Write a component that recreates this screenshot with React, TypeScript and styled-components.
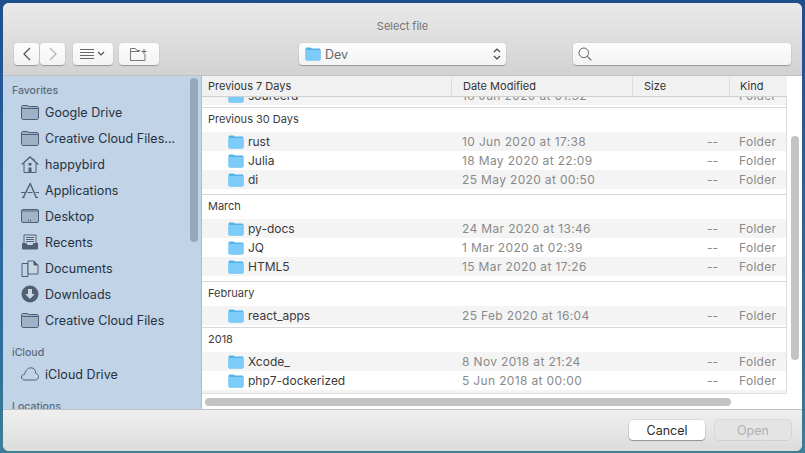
import React from "react";
import styled, { createGlobalStyle } from "styled-components";

const Global = createGlobalStyle`
  html, body { margin: 0; padding: 0; width: 805px; height: 453px; overflow: hidden; }
  body {
    background: linear-gradient(180deg, #1d4f8f 0%, #2a609c 40%, #2f6f99 80%, #3f7f96 100%);
    font-family: Inter, "Liberation Sans", sans-serif;
  }
`;

const Desktop = styled.div`
  width: 805px;
  height: 453px;
  padding: 3px 3px 2px 3px;
  box-sizing: border-box;
`;
const Win = styled.div`
  height: 448px;
  border-radius: 6px;
  overflow: hidden;
  display: flex;
  flex-direction: column;
  background: #ececec;
`;
const TitleBar = styled.div`
  height: 73px;
  flex: none;
  box-sizing: border-box;
  background: linear-gradient(180deg, #e9e9e9 0%, #d2d2d2 100%);
  border-bottom: 1px solid #c2c2c2;
  display: flex;
  flex-direction: column;
`;
const Title = styled.div`
  height: 40px;
  flex: none;
  box-sizing: border-box;
  padding-top: 16px;
  font-size: 11px;
  line-height: 14px;
  text-align: center;
  color: #727272;
`;
const Toolbar = styled.div`
  display: flex;
  padding-left: 11px;
  height: 22px;
  align-items: stretch;
`;
const ToolButton = styled.div<{ $w: number; $ml?: number }>`
  width: ${(p) => p.$w}px;
  flex: none;
  box-sizing: border-box;
  margin-left: ${(p) => p.$ml ?? 0}px;
  background: linear-gradient(180deg, #fdfdfd, #f3f3f3);
  border-radius: 4px;
  box-shadow: 0 1px 1px rgba(0, 0, 0, 0.28), 0 0 0 0.5px rgba(0, 0, 0, 0.06);
  display: flex;
  align-items: center;
  justify-content: center;
  color: #555;
`;
const PopUp = styled(ToolButton)`
  justify-content: flex-start;
  padding: 0 5px 0 6px;
  gap: 4px;
  font-size: 12.5px;
  color: #666;
`;
const PopText = styled.span`
  flex: 1;
`;
const Search = styled(ToolButton)`
  justify-content: flex-start;
  padding-left: 5px;
`;
const Body = styled.div`
  height: 333px;
  flex: none;
  display: flex;
`;
const Sidebar = styled.div`
  width: 199px;
  flex: none;
  position: relative;
  overflow: hidden;
  box-sizing: border-box;
  background: #c0d3e7;
  border-right: 1px solid #a8bed6;
  padding-top: 7px;
  color: #2b3a4d;
`;
const SideHead = styled.div<{ $mt?: number }>`
  height: 16px;
  line-height: 16px;
  margin-top: ${(p) => p.$mt ?? 0}px;
  padding-left: 9px;
  font-size: 10.5px;
  font-weight: 500;
  color: #5c6b7c;
`;
const SideRow = styled.div`
  height: 26px;
  display: flex;
  align-items: center;
  padding-left: 18px;
  gap: 6px;
  font-size: 12.5px;
  letter-spacing: 0.05px;
  color: #25323f;
  white-space: nowrap;
`;
const SideIconBox = styled.span`
  width: 18px;
  flex: none;
  display: flex;
  justify-content: center;
`;
const SideScroll = styled.div`
  position: absolute;
  right: 3px;
  top: 2px;
  width: 8px;
  height: 164px;
  border-radius: 4px;
  background: #95a7ba;
`;
const Main = styled.div`
  flex: 1;
  position: relative;
  display: flex;
  flex-direction: column;
  background: #fff;
  overflow: hidden;
`;
const Header = styled.div`
  width: 585px;
  height: 21px;
  flex: none;
  box-sizing: border-box;
  background: #f1f1f1;
  border-bottom: 1px solid #cfcfcf;
  display: grid;
  grid-template-columns: 249px 181px 97px 58px;
  font-size: 11px;
  color: #333;
`;
const HeadCell = styled.div<{ $sep?: boolean; $pl: number }>`
  padding-left: ${(p) => p.$pl}px;
  box-sizing: border-box;
  height: 18px;
  margin-top: 1px;
  line-height: 18px;
  border-left: ${(p) => (p.$sep ? "1px solid #dcdcdc" : "none")};
`;
const Viewport = styled.div`
  width: 585px;
  height: 297px;
  flex: none;
  overflow: hidden;
  box-sizing: border-box;
  border-right: 1px solid #dedede;
  border-bottom: 1px solid #dedede;
`;
const Scroller = styled.div`
  margin-top: -11px;
`;
const Group = styled.div<{ $pb: number }>`
  border-bottom: 1px solid #d8d8d8;
  padding-bottom: ${(p) => p.$pb}px;
`;
const GroupHead = styled.div`
  height: 24px;
  line-height: 22px;
  padding-left: 6px;
  font-size: 11px;
  color: #3c3c3c;
  background: #fff;
`;
const Row = styled.div<{ $alt?: boolean }>`
  height: 19px;
  display: grid;
  grid-template-columns: 249px 181px 97px 58px;
  align-items: center;
  background: ${(p) => (p.$alt ? "#f4f4f4" : "#fff")};
  font-size: 12px;
`;
const NameCell = styled.div`
  display: flex;
  align-items: center;
  gap: 4px;
  padding-left: 26px;
  color: #3a3a3a;
`;
const DateCell = styled.div`
  padding-left: 11px;
  color: #8a8a8a;
  letter-spacing: 0.35px;
  white-space: nowrap;
`;
const SizeCell = styled.div`
  text-align: right;
  padding-right: 11px;
  color: #8a8a8a;
`;
const KindCell = styled.div`
  padding-left: 10px;
  letter-spacing: 0.3px;
  color: #8a8a8a;
`;
const VScroll = styled.div`
  position: absolute;
  right: 3px;
  top: 60px;
  width: 8px;
  height: 224px;
  border-radius: 4px;
  background: #c3c3c3;
`;
const HTrack = styled.div`
  flex: 1;
  display: flex;
  align-items: center;
  padding-left: 3px;
`;
const HThumb = styled.div`
  width: 526px;
  height: 8px;
  border-radius: 4px;
  background: #c3c3c3;
`;
const Footer = styled.div`
  flex: 1;
  box-sizing: border-box;
  border-top: 1px solid #c2c2c2;
  background: linear-gradient(180deg, #efefef 0%, #dcdcdc 100%);
  display: flex;
  justify-content: flex-end;
  gap: 10px;
  padding: 10px 11px 0 0;
`;
const Btn = styled.div<{ $disabled?: boolean }>`
  width: 76px;
  height: 20px;
  line-height: 21px;
  text-align: center;
  font-size: 12.5px;
  border-radius: 4px;
  color: ${(p) => (p.$disabled ? "#b0b0b0" : "#2a2a2a")};
  background: ${(p) => (p.$disabled ? "#e4e4e4" : "#fff")};
  box-shadow: ${(p) =>
    p.$disabled
      ? "0 0 0 1px rgba(0,0,0,0.07)"
      : "0 1px 1px rgba(0,0,0,0.3), 0 0 0 0.5px rgba(0,0,0,0.15)"};
`;

const Folder = () => (
  <svg width="16" height="14" viewBox="0 0 16 14" style={{ flex: "none" }}>
    <path d="M.5 2.200C.5 1.200 1.200.6 2 .6h3.200c.8 0 1.100.9 1.900.9H14c.9 0 1.500.6 1.500 1.500v9c0 .9-.6 1.500-1.500 1.500H2c-.9 0-1.500-.6-1.500-1.500z" fill="#52b3ea" />
    <path d="M.5 3.600c0-.4.3-.7.7-.7h13.600c.4 0 .7.3.7.7v8.700c0 .7-.5 1.200-1.200 1.200H1.700c-.7 0-1.200-.5-1.200-1.200z" fill="#7ccbf8" />
  </svg>
);

const stroke = { fill: "none", stroke: "#4f6074", strokeWidth: 1 };

const SideFolder = () => (
  <svg width="18" height="15" viewBox="0 0 18 15">
    <path d="M.5 2c0-.8.6-1.500 1.500-1.500h4c.8 0 1 1 1.800 1H16c.8 0 1.500.6 1.500 1.500v10c0 .8-.7 1.500-1.500 1.500H2c-.9 0-1.500-.7-1.500-1.500z" fill="#9fb1c6" stroke="#4f6074" />
    <path d="M.5 3.500h17" {...stroke} />
  </svg>
);
const HomeIcon = () => (
  <svg width="18" height="17" viewBox="0 0 18 17">
    <path d="M.8 8.500 9 1l8.200 7.500" fill="none" stroke="#4f6074" strokeWidth="1.300" />
    <path d="M3 7v9.500h12V7" {...stroke} />
    <path d="M13 2.500v2.500" {...stroke} />
    <rect x="7.500" y="11.500" width="3" height="5" fill="#4f6074" />
    <rect x="7.500" y="7" width="3" height="2.500" fill="#4f6074" />
  </svg>
);
const AppsIcon = () => (
  <svg width="18" height="17" viewBox="0 0 18 17">
    <path d="M2 16 9.500 1M9 1l6.500 15" fill="none" stroke="#4f6074" strokeWidth="1.400" />
    <path d="M0 10.500h4M6.500 10.500h5M14.500 10.500h3.500" fill="none" stroke="#4f6074" strokeWidth="1.100" />
    <path d="M1 15.500h2.500M14.500 15.500H17" stroke="#4f6074" strokeWidth="1" />
  </svg>
);
const DesktopIcon = () => (
  <svg width="18" height="14" viewBox="0 0 18 14">
    <rect x=".5" y=".5" width="17" height="13" rx="1.500" fill="#a2b4c8" stroke="#4f6074" />
    <rect x="1" y="1" width="16" height="2" fill="#7a8ca1" />
    <path d="M7 11.500h4" stroke="#4f6074" strokeDasharray="1 1" strokeWidth="1.500" />
  </svg>
);
const RecentsIcon = () => (
  <svg width="18" height="16" viewBox="0 0 18 16">
    <path d="M3 9V1h12v8" fill="#c9d6e4" stroke="#4f6074" />
    <path d="M5 3.500h8M5 5.500h8M5 7.500h8" {...stroke} />
    <path d="M1 9h4.500l1 2h5l1-2H17v5.500c0 .6-.4 1-1 1H2c-.6 0-1-.4-1-1z" fill="#4f6074" />
  </svg>
);
const DocsIcon = () => (
  <svg width="18" height="17" viewBox="0 0 18 17">
    <path d="M1 3.500h6v13H1z" fill="none" stroke="#4f6074" />
    <path d="M7 1h6l4 4v9H7z" fill="#c9d6e4" stroke="#4f6074" />
    <path d="M13 1v4h4" fill="#4f6074" stroke="#4f6074" />
  </svg>
);
const DownloadIcon = () => (
  <svg width="18" height="18" viewBox="0 0 18 18">
    <circle cx="9" cy="9" r="8.500" fill="#4f6074" />
    <path d="M7 4h4v5h2.800L9 14 4.200 9H7z" fill="#c9d6e4" />
  </svg>
);
const CloudIcon = () => (
  <svg width="18" height="14" viewBox="0 0 18 14">
    <path d="M4 13c-2 0-3.500-1.300-3.500-3C.5 8.300 2 7.300 3.500 7.400 4 4.500 6.500.8 10 .8c3 0 4.800 2.500 4.600 5.400 1.600.4 2.900 1.800 2.900 3.400 0 2-1.500 3.400-3.500 3.400z" {...stroke} />
  </svg>
);

const favs: [React.ReactNode, string][] = [
  [<SideFolder />, "Google Drive"],
  [<SideFolder />, "Creative Cloud Files..."],
  [<HomeIcon />, "happybird"],
  [<AppsIcon />, "Applications"],
  [<DesktopIcon />, "Desktop"],
  [<RecentsIcon />, "Recents"],
  [<DocsIcon />, "Documents"],
  [<DownloadIcon />, "Downloads"],
  [<SideFolder />, "Creative Cloud Files"],
];

const groups = [
  { title: "Previous 30 Days", pb: 5, rows: [["rust", "10 Jun 2020 at 17:38"], ["Julia", "18 May 2020 at 22:09"], ["di", "25 May 2020 at 00:50"]] },
  { title: "March", pb: 5, rows: [["py-docs", "24 Mar 2020 at 13:46"], ["JQ", "1 Mar 2020 at 02:39"], ["HTML5", "15 Mar 2020 at 17:26"]] },
  { title: "February", pb: 2, rows: [["react_apps", "25 Feb 2020 at 16:04"]] },
  { title: "2018", pb: 2, rows: [["Xcode_", "8 Nov 2018 at 21:24"], ["php7-dockerized", "5 Jun 2018 at 00:00"], ["", ""]] },
];

const FileRow = ({ name, date, alt }: { name: string; date: string; alt: boolean }) => (
  <Row $alt={alt}>
    <NameCell>
      <Folder />
      {name}
    </NameCell>
    <DateCell>{date}</DateCell>
    <SizeCell>{name && "--"}</SizeCell>
    <KindCell>{name && "Folder"}</KindCell>
  </Row>
);

export default function App() {
  return (
    <Desktop>
      <Global />
      <Win>
        <TitleBar>
          <Title>Select file</Title>
          <Toolbar>
            <ToolButton $w={25}>
              <svg width="10" height="14" viewBox="0 0 10 14"><path d="M8 1 2 7l6 6" fill="none" stroke="#555" strokeWidth="1.300" /></svg>
            </ToolButton>
            <ToolButton $w={25} $ml={1}>
              <svg width="10" height="14" viewBox="0 0 10 14"><path d="m2 1 6 6-6 6" fill="none" stroke="#b4b4b4" strokeWidth="1.300" /></svg>
            </ToolButton>
            <ToolButton $w={40} $ml={8}>
              <svg width="26" height="12" viewBox="0 0 26 12">
                <path d="M0 1.500h14M0 4.500h14M0 7.500h14M0 10.500h14" stroke="#666" strokeWidth="1" />
                <path d="m18 4 3 3 3-3" fill="none" stroke="#555" strokeWidth="1.200" />
              </svg>
            </ToolButton>
            <ToolButton $w={40} $ml={6}>
              <svg width="18" height="13" viewBox="0 0 18 13">
                <path d="M.5 12.500V.5h5l1.500 2h3M.5 3.500h9M.5 12.500h14.500V6" fill="none" stroke="#777" strokeWidth="1" />
                <path d="M14 1v5M11.500 3.500h5" stroke="#666" strokeWidth="1" />
              </svg>
            </ToolButton>
            <PopUp $w={207} $ml={140}>
              <Folder />
              <PopText>Dev</PopText>
              <svg width="8" height="14" viewBox="0 0 8 14">
                <path d="m1 5 3-3 3 3M1 9l3 3 3-3" fill="none" stroke="#444" strokeWidth="1.200" />
              </svg>
            </PopUp>
            <Search $w={218} $ml={67}>
              <svg width="14" height="14" viewBox="0 0 14 14">
                <circle cx="5.800" cy="5.800" r="4.800" fill="none" stroke="#666" />
                <path d="m9.300 9.300 4 4" stroke="#666" strokeWidth="1.200" />
              </svg>
            </Search>
          </Toolbar>
        </TitleBar>
        <Body>
          <Sidebar>
            <SideHead>Favorites</SideHead>
            {favs.map(([icon, label], i) => (
              <SideRow key={i}>
                <SideIconBox>{icon}</SideIconBox>
                {label}
              </SideRow>
            ))}
            <SideHead $mt={12}>iCloud</SideHead>
            <SideRow>
              <SideIconBox><CloudIcon /></SideIconBox>
              iCloud Drive
            </SideRow>
            <SideHead $mt={12}>Locations</SideHead>
            <SideScroll />
          </Sidebar>
          <Main>
            <Header>
              <HeadCell $pl={6}>Previous 7 Days</HeadCell>
              <HeadCell $sep $pl={11}>Date Modified</HeadCell>
              <HeadCell $sep $pl={11}>Size</HeadCell>
              <HeadCell $sep $pl={10}>Kind</HeadCell>
            </Header>
            <Viewport>
              <Scroller>
                <Group $pb={2}>
                  <FileRow name="sourcerd" date="18 Jun 2020 at 01:32" alt />
                </Group>
                {groups.map((g) => (
                  <Group key={g.title} $pb={g.pb}>
                    <GroupHead>{g.title}</GroupHead>
                    {g.rows.map(([n, d], i) => (
                      <FileRow key={i} name={n} date={d} alt={i % 2 === 0} />
                    ))}
                  </Group>
                ))}
              </Scroller>
            </Viewport>
            <HTrack>
              <HThumb />
            </HTrack>
            <VScroll />
          </Main>
        </Body>
        <Footer>
          <Btn>Cancel</Btn>
          <Btn $disabled>Open</Btn>
        </Footer>
      </Win>
    </Desktop>
  );
}
